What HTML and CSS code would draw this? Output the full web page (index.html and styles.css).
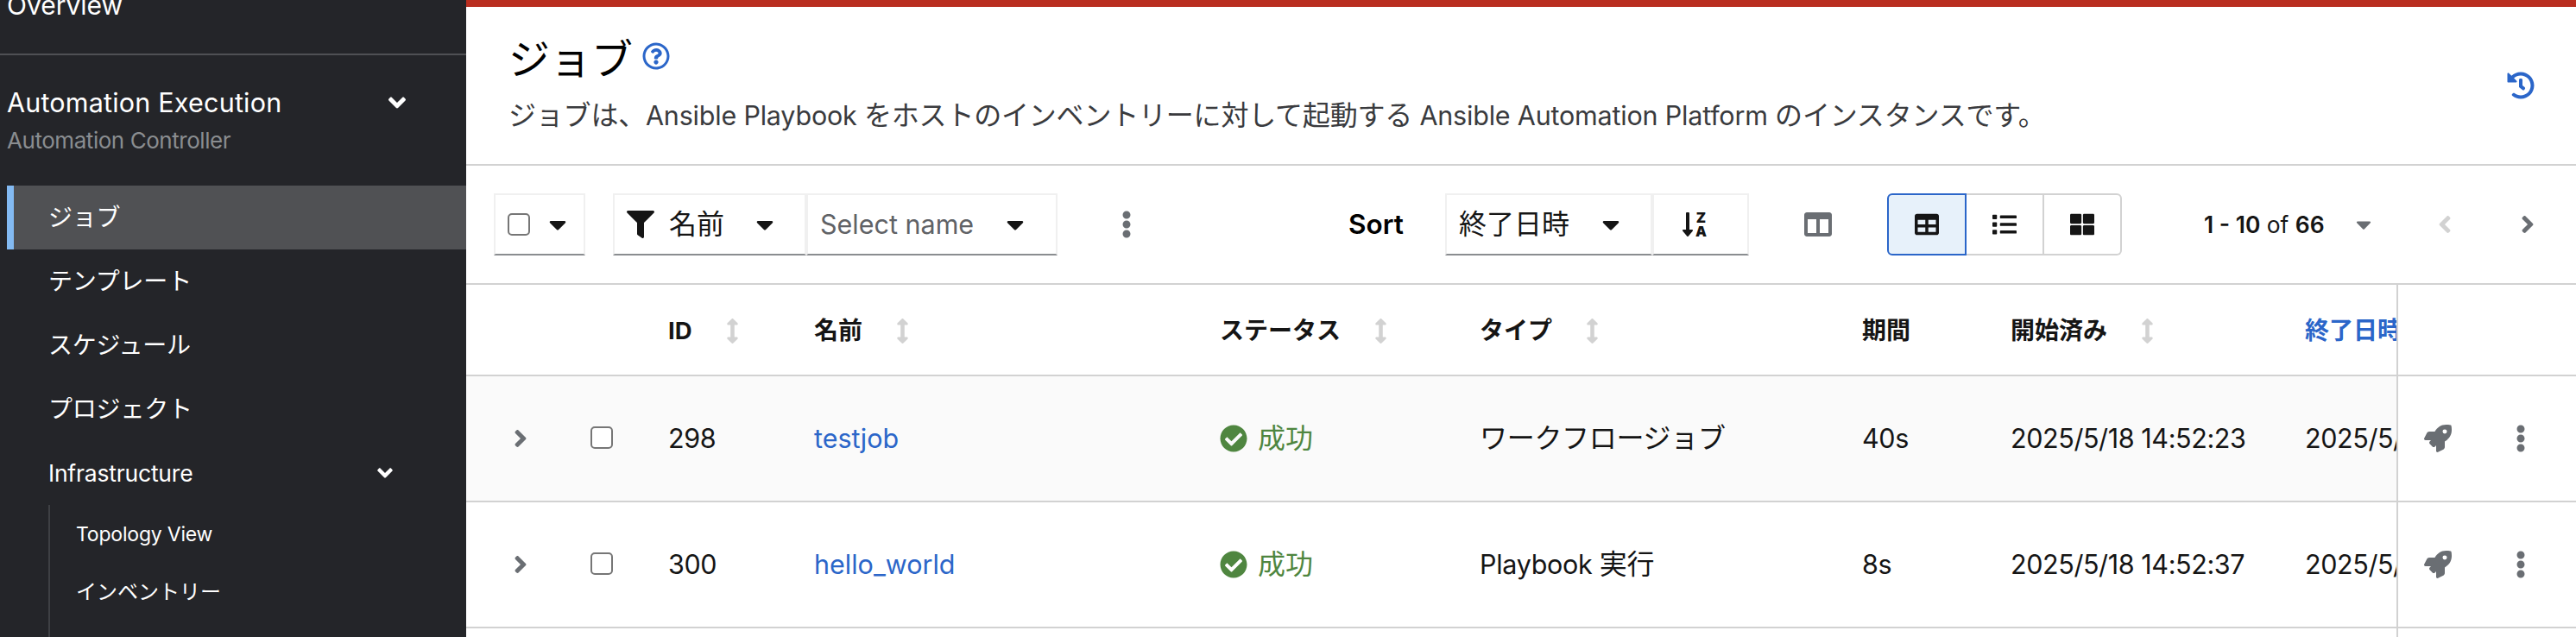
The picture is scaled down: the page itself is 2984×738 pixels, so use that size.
FILE: index.html
```html
<!DOCTYPE html>
<html lang="ja">
<head>
  <meta charset="UTF-8" />
  <meta name="viewport" content="width=device-width, initial-scale=1" />
  <title>ジョブ</title>
  <link rel="stylesheet" href="styles.css">
</head>
<body>
  <!-- icon sprite -->
  <svg class="sprite" width="0" height="0">
    <symbol id="angle-right" viewBox="0 0 256 512"><path d="M224.3 273l-136 136c-9.4 9.4-24.6 9.4-33.9 0l-22.6-22.6c-9.4-9.4-9.4-24.6 0-33.9l96.4-96.4-96.4-96.4c-9.4-9.4-9.4-24.6 0-33.9L54.3 103c9.4-9.4 24.6-9.4 33.9 0l136 136c9.5 9.4 9.5 24.6.1 34z"/></symbol>
    <symbol id="angle-down" viewBox="0 0 320 512"><path d="M143 352.3L7 216.3c-9.4-9.4-9.4-24.6 0-33.9l22.6-22.6c9.4-9.4 24.6-9.4 33.9 0l96.4 96.4 96.4-96.4c9.4-9.4 24.6-9.4 33.9 0l22.6 22.6c9.4 9.4 9.4 24.6 0 33.9l-136 136c-9.2 9.4-24.4 9.4-33.8 0z"/></symbol>
    <symbol id="caret-down" viewBox="0 0 320 512"><path d="M31.3 192h257.3c17.8 0 26.7 21.5 14.1 34.1L174.1 354.8c-7.8 7.8-20.5 7.8-28.3 0L17.2 226.1C4.6 213.5 13.5 192 31.3 192z"/></symbol>
    <symbol id="filter" viewBox="0 0 512 512"><path d="M487.976 0H24.028C2.71 0-8.047 25.866 7.058 40.971L192 225.941V432c0 7.831 3.821 15.17 10.237 19.662l80 55.98C298.02 518.69 320 507.493 320 487.98V225.941l184.947-184.97C520.021 25.896 509.338 0 487.976 0z"/></symbol>
    <symbol id="kebab" viewBox="0 0 192 512"><path d="M96 184c39.8 0 72 32.2 72 72s-32.2 72-72 72-72-32.2-72-72 32.2-72 72-72zM24 80c0 39.8 32.2 72 72 72s72-32.2 72-72S135.8 8 96 8 24 40.2 24 80zm0 352c0 39.8 32.2 72 72 72s72-32.2 72-72-32.2-72-72-72-72 32.2-72 72z"/></symbol>
    <symbol id="check-circle" viewBox="0 0 512 512"><path d="M504 256c0 136.967-111.033 248-248 248S8 392.967 8 256 119.033 8 256 8s248 111.033 248 248zM227.314 387.314l184-184c6.248-6.248 6.248-16.379 0-22.627l-22.627-22.627c-6.248-6.249-16.379-6.249-22.628 0L216 308.118l-70.059-70.059c-6.248-6.248-16.379-6.248-22.628 0l-22.627 22.627c-6.248 6.248-6.248 16.379 0 22.627l104 104c6.249 6.249 16.379 6.249 22.628.001z"/></symbol>
    <symbol id="history" viewBox="0 0 512 512"><path d="M504 255.531c.253 136.64-111.18 248.372-247.82 248.468-59.015.042-113.223-20.53-155.822-54.911-11.077-8.94-11.905-25.541-1.839-35.607l11.267-11.267c8.609-8.609 22.353-9.551 31.891-1.984C173.062 425.135 212.781 440 256 440c101.705 0 184-82.311 184-184 0-101.705-82.311-184-184-184-48.814 0-93.149 18.969-126.068 49.932l50.754 50.754c10.08 10.08 2.941 27.314-11.313 27.314H24c-8.837 0-16-7.163-16-16V38.627c0-14.254 17.234-21.393 27.314-11.314l49.372 49.372C129.209 34.136 189.552 8 256 8c136.81 0 247.747 110.78 248 247.531zm-180.912 78.784l9.823-12.63c8.138-10.463 6.253-25.542-4.21-33.679L288 256.349V152c0-13.255-10.745-24-24-24h-16c-13.255 0-24 10.745-24 24v135.651l65.409 50.874c10.463 8.137 25.541 6.253 33.679-4.21z"/></symbol>
    <symbol id="rocket" viewBox="0 0 512 512"><path d="M505.12 19.094c-1.19-5.532-6.658-11-12.207-12.188C460.716 0 435.507 0 410.407 0 307.175 0 245.27 55.203 199.052 128H94.838c-16.348.016-35.557 11.875-42.887 26.484L2.516 253.297A28.4 28.4 0 0 0 0 264a24.009 24.009 0 0 0 24.006 24h103.81l-22.474 22.469c-11.366 11.361-12.997 32.258 0 45.25l50.904 50.906c11.156 11.188 32.156 13.156 45.277 0l22.475-22.469V488a24.009 24.009 0 0 0 24.006 24 28.56 28.56 0 0 0 10.707-2.516l98.728-49.39c14.629-7.297 26.508-26.5 26.508-42.86V312.797c72.598-46.313 128.035-108.406 128.035-211.094.093-25.203.093-50.406-6.862-82.61zM384.04 168a40 40 0 1 1 40.01-40 40.023 40.023 0 0 1-40.01 40z"/></symbol>
    <symbol id="columns" viewBox="0 0 512 512"><path d="M464 32H48C21.49 32 0 53.49 0 80v352c0 26.51 21.49 48 48 48h416c26.51 0 48-21.49 48-48V80c0-26.51-21.49-48-48-48zM224 416H64V160h160v256zm224 0H288V160h160v256z"/></symbol>
    <symbol id="table" viewBox="0 0 512 512"><path d="M464 32H48C21.49 32 0 53.49 0 80v352c0 26.51 21.49 48 48 48h416c26.51 0 48-21.49 48-48V80c0-26.51-21.49-48-48-48zM224 416H64v-96h160v96zm0-160H64v-96h160v96zm224 160H288v-96h160v96zm0-160H288v-96h160v96z"/></symbol>
    <symbol id="list" viewBox="0 0 512 512"><path d="M80 368H16a16 16 0 0 0-16 16v64a16 16 0 0 0 16 16h64a16 16 0 0 0 16-16v-64a16 16 0 0 0-16-16zm0-320H16A16 16 0 0 0 0 64v64a16 16 0 0 0 16 16h64a16 16 0 0 0 16-16V64a16 16 0 0 0-16-16zm0 160H16a16 16 0 0 0-16 16v64a16 16 0 0 0 16 16h64a16 16 0 0 0 16-16v-64a16 16 0 0 0-16-16zm416 176H176a16 16 0 0 0-16 16v32a16 16 0 0 0 16 16h320a16 16 0 0 0 16-16v-32a16 16 0 0 0-16-16zm0-320H176a16 16 0 0 0-16 16v32a16 16 0 0 0 16 16h320a16 16 0 0 0 16-16V80a16 16 0 0 0-16-16zm0 160H176a16 16 0 0 0-16 16v32a16 16 0 0 0 16 16h320a16 16 0 0 0 16-16v-32a16 16 0 0 0-16-16z"/></symbol>
    <symbol id="th-large" viewBox="0 0 512 512"><path d="M296 32h192c13.255 0 24 10.745 24 24v160c0 13.255-10.745 24-24 24H296c-13.255 0-24-10.745-24-24V56c0-13.255 10.745-24 24-24zm-80 0H24C10.745 32 0 42.745 0 56v160c0 13.255 10.745 24 24 24h192c13.255 0 24-10.745 24-24V56c0-13.255-10.745-24-24-24zM0 296v160c0 13.255 10.745 24 24 24h192c13.255 0 24-10.745 24-24V296c0-13.255-10.745-24-24-24H24c-13.255 0-24 10.745-24 24zm296 184h192c13.255 0 24-10.745 24-24V296c0-13.255-10.745-24-24-24H296c-13.255 0-24 10.745-24 24v160c0 13.255 10.745 24 24 24z"/></symbol>
    <symbol id="sort" viewBox="0 0 256 512"><path d="M214.059 377.941H168V134.059h46.059c21.382 0 32.09-25.851 16.971-40.971L144.971 7.029c-9.373-9.373-24.568-9.373-33.941 0L24.971 93.088c-15.119 15.119-4.411 40.971 16.971 40.971H88v243.882H41.941c-21.382 0-32.09 25.851-16.971 40.971l86.059 86.059c9.373 9.373 24.568 9.373 33.941 0l86.059-86.059c15.12-15.119 4.412-40.971-16.97-40.971z"/></symbol>
    <symbol id="question" viewBox="0 0 512 512"><path d="M256 8C119.043 8 8 119.083 8 256c0 136.997 111.043 248 248 248s248-111.003 248-248C504 119.083 392.957 8 256 8zm0 448c-110.532 0-200-89.431-200-200 0-110.495 89.472-200 200-200 110.491 0 200 89.471 200 200 0 110.53-89.431 200-200 200zm107.244-255.2c0 67.052-72.421 68.084-72.421 92.863V300c0 6.627-5.373 12-12 12h-45.647c-6.627 0-12-5.373-12-12v-8.659c0-35.745 27.1-50.034 47.579-61.516 17.561-9.845 28.324-16.541 28.324-29.579 0-17.246-21.999-28.693-39.784-28.693-23.189 0-33.894 10.977-48.942 29.969-4.057 5.12-11.46 6.071-16.666 2.124l-27.824-21.098c-5.107-3.872-6.251-11.066-2.644-16.363C184.846 131.491 214.94 112 261.794 112c49.071 0 101.45 38.304 101.45 88.8zM298 368c0 23.159-18.841 42-42 42s-42-18.841-42-42 18.841-42 42-42 42 18.841 42 42z"/></symbol>
  </svg>

  <nav class="sidebar">
    <a class="nav-overview">Overview</a>
    <div class="nav-section">
      <div class="nav-section-title">Automation Execution
        <svg class="i-down"><use href="#angle-down"/></svg>
      </div>
      <div class="nav-section-sub">Automation Controller</div>
    </div>
    <a class="nav-item active">ジョブ</a>
    <a class="nav-item">テンプレート</a>
    <a class="nav-item">スケジュール</a>
    <a class="nav-item">プロジェクト</a>
    <a class="nav-item expandable"><span class="nav-en">Infrastructure</span>
      <svg class="i-down-sm"><use href="#angle-down"/></svg>
    </a>
    <div class="subnav">
      <a class="subnav-item"><span class="subnav-en">Topology View</span></a>
      <a class="subnav-item">インベントリー</a>
    </div>
  </nav>

  <main class="main">
    <header class="page-header">
      <div>
        <h1>ジョブ <svg class="i-help"><use href="#question"/></svg></h1>
        <p>ジョブは、<span class="en">Ansible Playbook </span>をホストのインベントリーに対して起動する<span class="en"> Ansible Automation Platform </span>のインスタンスです。</p>
      </div>
      <svg class="i-history"><use href="#history"/></svg>
    </header>

    <div class="toolbar">
      <div class="select bulk">
        <span class="checkbox"></span>
        <svg class="i-caret"><use href="#caret-down"/></svg>
      </div>
      <div class="select filter-by">
        <svg class="i-filter"><use href="#filter"/></svg>
        <span>名前</span>
        <svg class="i-caret"><use href="#caret-down"/></svg>
      </div>
      <div class="select filter-value">
        <span class="placeholder">Select name</span>
        <svg class="i-caret"><use href="#caret-down"/></svg>
      </div>
      <svg class="i-kebab toolbar-kebab"><use href="#kebab"/></svg>

      <span class="sort-label">Sort</span>
      <div class="select sort-by">
        <span>終了日時</span>
        <svg class="i-caret"><use href="#caret-down"/></svg>
      </div>
      <div class="select sort-dir">
        <svg class="i-za" viewBox="0 0 448 512">
          <path d="M176 352h-48V48a16 16 0 0 0-16-16H80a16 16 0 0 0-16 16v304H16c-14.19 0-21.36 17.24-11.29 27.31l80 96a16 16 0 0 0 22.62 0l80-96C197.35 369.26 190.22 352 176 352z"/>
          <text x="344" y="224" text-anchor="middle">Z</text>
          <text x="344" y="480" text-anchor="middle">A</text>
        </svg>
      </div>
      <svg class="i-columns"><use href="#columns"/></svg>

      <div class="view-toggle">
        <button class="view-btn selected"><svg><use href="#table"/></svg></button>
        <button class="view-btn"><svg><use href="#list"/></svg></button>
        <button class="view-btn"><svg><use href="#th-large"/></svg></button>
      </div>

      <div class="pagination">
        <span class="page-count"><b>1 - 10</b> of <b>66</b></span>
        <svg class="i-caret-sm"><use href="#caret-down"/></svg>
        <svg class="i-angle prev"><use href="#angle-right"/></svg>
        <svg class="i-angle next"><use href="#angle-right"/></svg>
      </div>
    </div>

    <div class="table">
      <div class="row head">
        <div class="cells">
          <span></span>
          <span></span>
          <span class="th"><span class="th-en">ID</span> <svg class="i-sort"><use href="#sort"/></svg></span>
          <span class="th">名前 <svg class="i-sort"><use href="#sort"/></svg></span>
          <span class="th">ステータス <svg class="i-sort"><use href="#sort"/></svg></span>
          <span class="th">タイプ <svg class="i-sort"><use href="#sort"/></svg></span>
          <span class="th">期間</span>
          <span class="th">開始済み <svg class="i-sort"><use href="#sort"/></svg></span>
          <span class="th sorted">終了日時</span>
        </div>
        <div class="actions"></div>
      </div>
      <div class="row striped">
        <div class="cells">
          <svg class="i-angle"><use href="#angle-right"/></svg>
          <span class="checkbox"></span>
          <span class="num">298</span>
          <a class="link">testjob</a>
          <span class="status"><svg><use href="#check-circle"/></svg>成功</span>
          <span class="type">ワークフロージョブ</span>
          <span class="num">40s</span>
          <span class="num">2025/5/18 14:52:23</span>
          <span class="num">2025/5/18 14:53:03</span>
        </div>
        <div class="actions">
          <svg class="i-rocket"><use href="#rocket"/></svg>
          <svg class="i-kebab"><use href="#kebab"/></svg>
        </div>
      </div>
      <div class="row">
        <div class="cells">
          <svg class="i-angle"><use href="#angle-right"/></svg>
          <span class="checkbox"></span>
          <span class="num">300</span>
          <a class="link">hello_world</a>
          <span class="status"><svg><use href="#check-circle"/></svg>成功</span>
          <span class="type"><span class="en">Playbook </span>実行</span>
          <span class="num">8s</span>
          <span class="num">2025/5/18 14:52:37</span>
          <span class="num">2025/5/18 14:52:45</span>
        </div>
        <div class="actions">
          <svg class="i-rocket"><use href="#rocket"/></svg>
          <svg class="i-kebab"><use href="#kebab"/></svg>
        </div>
      </div>
      <div class="row last">
        <div class="cells"></div>
        <div class="actions"></div>
      </div>
    </div>
  </main>
</body>
</html>
```
FILE: styles.css
```css
:root {
  --sidebar: #242529;
  --sidebar-active: #505154;
  --blue: #2b66c9;
  --green: #4f8640;
  --text: #151515;
  --gray: #6a6e73;
  --line: #d2d2d2;
  --line-light: #f0f0f0;
}

* {
  box-sizing: border-box;
}

body {
  margin: 0;
  height: 738px;
  display: flex;
  overflow: hidden;
  font-family: Inter, "Noto Sans CJK JP", sans-serif;
  font-size: 32px;
  line-height: 48px;
  color: var(--text);
  background: #fff;
}

svg {
  display: block;
  flex: none;
  fill: currentColor;
}

.sprite {
  display: none;
}

/* ----- Sidebar ----- */
.sidebar {
  width: 540px;
  flex: none;
  background: var(--sidebar);
  color: #fff;
  overflow: hidden;
}

.nav-overview {
  display: block;
  height: 64px;
  padding-left: 8px;
  line-height: 12px;
  font-size: 30px;
  border-bottom: 2px solid #4f5054;
}

.nav-section {
  height: 151px;
  padding: 35px 70px 0 8px;
}

.nav-section-title {
  display: flex;
  align-items: center;
  justify-content: space-between;
  line-height: 40px;
  font-size: 30.5px;
  letter-spacing: 0.2px;
}

.nav-section-sub {
  margin-top: 4px;
  line-height: 40px;
  font-size: 26px;
  letter-spacing: -0.45px;
  color: #8a8d90;
}

.nav-item {
  display: flex;
  align-items: center;
  height: 74px;
  padding-left: 56px;
  font-size: 28px;
  letter-spacing: -0.2px;
}

.nav-item.active {
  margin-left: 8px;
  padding-left: 40px;
  border-left: 8px solid #83baf2;
  background: var(--sidebar-active);
}

.nav-item.expandable {
  justify-content: space-between;
  padding-right: 85px;
}

.nav-en {
  font-size: 26.5px;
}

.subnav {
  margin-left: 56px;
  height: 153px;
  padding-left: 30px;
  border-left: 2px solid #3e4044;
}

.subnav-item {
  display: flex;
  align-items: center;
  height: 67px;
  font-size: 24px;
}

.subnav-en {
  font-size: 23px;
  letter-spacing: -0.2px;
}

/* ----- Icons ----- */
.i-down { width: 20px; height: 32px; }
.i-down-sm { width: 18px; height: 28px; }
.i-caret { width: 20px; height: 32px; }
.i-caret-sm { width: 18px; height: 28px; color: var(--gray); }
.i-filter { width: 32px; height: 32px; }
.i-kebab { width: 12px; height: 32px; color: var(--gray); }
.i-angle { width: 16px; height: 32px; color: var(--gray); }
.i-rocket { width: 32px; height: 32px; color: var(--gray); }
.i-history { width: 32px; height: 32px; color: var(--blue); }
.i-columns { width: 32px; height: 32px; color: var(--gray); }
.i-sort { width: 15px; height: 29px; color: var(--line); }

.i-za {
  width: 28px;
  height: 32px;
  overflow: visible;
}

.i-za text {
  font-size: 262px;
  font-weight: 900;
}

.i-help {
  width: 32px;
  height: 32px;
  margin-left: 11px;
  color: var(--blue);
}

/* ----- Page header ----- */
.main {
  flex: 1;
  min-width: 0;
  border-top: 8px solid #b92e20;
}

.page-header {
  display: flex;
  justify-content: space-between;
  height: 184px;
  padding: 32px 48px 0 49px;
  border-bottom: 2px solid var(--line);
}

.page-header h1 {
  display: flex;
  margin: 0;
  font-size: 48px;
  font-weight: 400;
  line-height: 58px;
  color: #000;
}

.page-header h1 .i-help {
  margin-top: 9px;
}

.page-header p {
  margin: 12px 0 0;
  line-height: 48px;
  letter-spacing: -0.2px;
  color: #3a3b3e;
  white-space: pre;
}

.page-header .i-history {
  margin-top: 43px;
}

.en {
  font-size: 30.5px;
}

/* ----- Toolbar ----- */
.toolbar {
  display: flex;
  align-items: center;
  height: 138px;
  padding: 0 48px 0 32px;
  border-bottom: 2px solid var(--line);
}

.select {
  display: flex;
  align-items: center;
  justify-content: space-between;
  height: 72px;
  padding: 0 20px 0 14px;
  border: 2px solid var(--line-light);
  border-bottom-color: #8a8d90;
}

.checkbox {
  width: 26px;
  height: 26px;
  flex: none;
  border: 2px solid #767676;
  border-radius: 5px;
  background: #fff;
}

.bulk {
  width: 106px;
  margin-right: 32px;
}

.filter-by {
  width: 224px;
  padding-right: 36px;
}

.filter-by span {
  margin-right: 20px;
}

.filter-value {
  width: 291px;
  padding-right: 37px;
}

.placeholder {
  font-size: 30.5px;
  color: #606266;
}

.toolbar-kebab {
  margin-left: 74px;
}

.sort-label {
  width: 112px;
  margin-left: 251px;
  font-size: 31.5px;
  font-weight: 600;
  color: #000;
}

.sort-by {
  width: 240px;
  padding-right: 36px;
}

.sort-dir {
  width: 112px;
  padding-left: 33px;
}

.i-columns {
  margin: 0 64px;
}

.view-toggle {
  display: flex;
}

.view-btn {
  display: flex;
  align-items: center;
  justify-content: center;
  width: 90px;
  height: 72px;
  padding: 0;
  border: 2px solid var(--line);
  border-left-width: 0;
  background: #fff;
  color: var(--text);
}

.view-btn svg {
  width: 28px;
  height: 28px;
}

.view-btn.selected {
  width: 92px;
  border: 2px solid var(--blue);
  border-radius: 6px 0 0 6px;
  background: #e7f1fa;
}

.view-btn:last-child {
  border-radius: 0 6px 6px 0;
}

.pagination {
  display: flex;
  align-items: center;
  margin-left: auto;
}

.page-count {
  width: 176px;
  font-size: 26.4px;
  white-space: nowrap;
}

.page-count b {
  font-weight: 600;
}

.pagination .prev {
  margin-left: 77px;
  transform: scaleX(-1);
  color: var(--line);
}

.pagination .next {
  margin-left: 80px;
}

/* ----- Table ----- */
.row {
  display: flex;
  height: 146px;
  border-bottom: 2px solid var(--line);
}

.row.head {
  height: 106px;
}

.row.last {
  height: 10px;
  border-bottom: none;
}

.cells {
  flex: 1;
  min-width: 0;
  display: grid;
  grid-template-columns: 89px 90px 169px 470px 301px 443px 172px 341px 300px;
  align-items: center;
  padding-left: 55px;
  overflow: hidden;
  white-space: nowrap;
}

.cells .checkbox {
  margin-bottom: 3px;
}

.row.striped .cells {
  background: #fafafa;
}

.actions {
  width: 208px;
  flex: none;
  display: flex;
  align-items: center;
  justify-content: space-between;
  padding: 0 58px 0 30px;
  border-left: 2px solid var(--line);
}

.th {
  display: flex;
  align-items: center;
  padding-top: 2px;
  font-size: 28px;
  font-weight: 700;
}

.th-en {
  font-size: 27.5px;
}

.th .i-sort {
  margin-left: 39px;
}

.sorted {
  color: var(--blue);
}

.num {
  font-size: 30.5px;
  letter-spacing: -0.4px;
}

.link {
  font-size: 30.5px;
  color: var(--blue);
}

.type {
  letter-spacing: -0.3px;
}

.status {
  display: flex;
  align-items: center;
  gap: 12px;
  color: var(--green);
}

.status svg {
  width: 32px;
  height: 32px;
}
```
